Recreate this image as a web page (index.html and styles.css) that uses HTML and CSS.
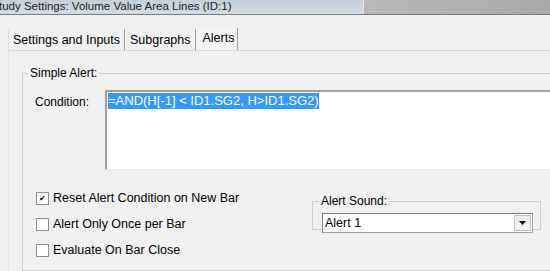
FILE: index.html
```html
<!DOCTYPE html>
<html lang="en">
  <head>
    <meta charset="UTF-8" />
    <title>Study Settings</title>
    <link rel="stylesheet" href="styles.css">
  </head>
  <body>
    <div class="titlebar">
      <div class="title-glass">tudy Settings: Volume Value Area Lines (ID:1)</div>
      <div class="title-rest"></div>
    </div>

    <div class="dialog">
      <div class="tabs">
        <div class="tab">Settings and Inputs</div>
        <div class="tab">Subgraphs</div>
        <div class="tab active">Alerts</div>
      </div>

      <div class="panel">
        <fieldset class="group simple">
          <legend>Simple Alert:</legend>
          <div class="cond-row">
            <label class="cond-label">Condition:</label>
            <div class="cond-box"><span class="selected">=AND(H[-1] &lt; ID1.SG2, H&gt;ID1.SG2)</span></div>
          </div>

          <div class="bottom-row">
            <div class="checks">
              <label class="check"><span class="box checked">&#10004;</span>Reset Alert Condition on New Bar</label>
              <label class="check"><span class="box"></span>Alert Only Once per Bar</label>
              <label class="check"><span class="box"></span>Evaluate On Bar Close</label>
            </div>

            <fieldset class="group sound">
              <legend>Alert Sound:</legend>
              <div class="select">
                <span class="select-value">Alert 1</span>
                <span class="select-btn">
                  <svg width="7" height="4" viewBox="0 0 7 4"><path d="M0 0h7L3.5 4z" fill="#000"/></svg>
                </span>
              </div>
            </fieldset>
          </div>
        </fieldset>
      </div>
    </div>
  </body>
</html>
```

FILE: styles.css
```css
body {
  margin: 0;
  padding: 0;
  width: 550px;
  height: 271px;
  overflow: hidden;
  background-color: #f0f0f0;
  font-family: Arial, "Liberation Sans", sans-serif;
  font-size: 12px;
  color: #000;
}
.titlebar {
  display: flex;
  height: 14px;
  border-bottom: 1px solid #7c7c7c;
}
.title-glass {
  width: 363px;
  background: linear-gradient(to bottom, #c4cfda, #d3dce5);
  border-right: 1px solid #dde4ea;
  font-size: 11.5px;
  line-height: 12px;
  color: #222;
  white-space: nowrap;
  overflow: hidden;
  text-indent: -1px;
}
.title-rest {
  flex: 1;
  background: linear-gradient(to right, #b9b9b9, #a9a9a9);
}
.dialog {
  padding: 13px 0 0 8px;
  width: 640px;
}
.tabs {
  display: flex;
  align-items: flex-end;
  height: 22px;
  font-size: 12.5px;
}
.tab {
  padding: 4px 4px 3px 4px;
  border-right: 1px solid #a0a0a0;
  line-height: 14px;
}
.tab:first-child {
  border-left: 1px solid #dcdcdc;
}
.tab + .tab {
  padding-left: 5px;
}
.tab.active {
  padding: 3px 3px 5px 7px;
  background: #f4f4f4;
}
.panel {
  border-top: 1px solid #dadada;
  border-left: 1px solid #e4e4e4;
  padding: 15px 0 0 13px;
  height: 210px;
}
.group {
  margin: 0;
  border: 1px solid #cfcfcf;
}
.group legend {
  padding: 0 2px;
}
.simple {
  padding: 10px 0 0 12px;
  height: 193px;
}
.simple > legend {
  margin-left: -7px;
}
.cond-row {
  display: flex;
}
.cond-label {
  width: 70px;
  padding-top: 5px;
}
.cond-box {
  flex: 1;
  height: 76px;
  background: #fff;
  border-top: 2px solid #a0a0a0;
  border-left: 2px solid #a0a0a0;
  border-bottom: 1px solid #e8e8e8;
  padding: 1px 0 0 1px;
  font-size: 13px;
}
.selected {
  background: #3399ff;
  color: #fff;
  line-height: 16px;
  display: inline-block;
}
.bottom-row {
  display: flex;
  margin-top: 22px;
}
.checks {
  display: flex;
  flex-direction: column;
  gap: 14px;
  width: 277px;
}
.check {
  display: flex;
  align-items: center;
  height: 12px;
  font-size: 12.5px;
}
.box {
  width: 11px;
  height: 11px;
  border: 1px solid #8f8f8f;
  background: #fff;
  margin-right: 4px;
  margin-left: 1px;
  font-size: 8px;
  line-height: 11px;
  text-align: center;
}
.sound {
  width: 211px;
  padding: 5px 7px 10px 9px;
  margin-top: 2px;
  height: 19px;
}
.sound legend {
  margin-left: -3px;
}
.select {
  display: flex;
  height: 18px;
  background: #fff;
  border: 1px solid #a0a0a0;
  border-top-color: #808080;
  border-left-color: #808080;
}
.select-value {
  flex: 1;
  padding-left: 2px;
  line-height: 18px;
  font-size: 12.5px;
}
.select-btn {
  width: 15px;
  margin: 1px;
  background: #f0f0f0;
  border: 1px solid #c0c0c0;
  display: flex;
  align-items: center;
  justify-content: center;
}
```
